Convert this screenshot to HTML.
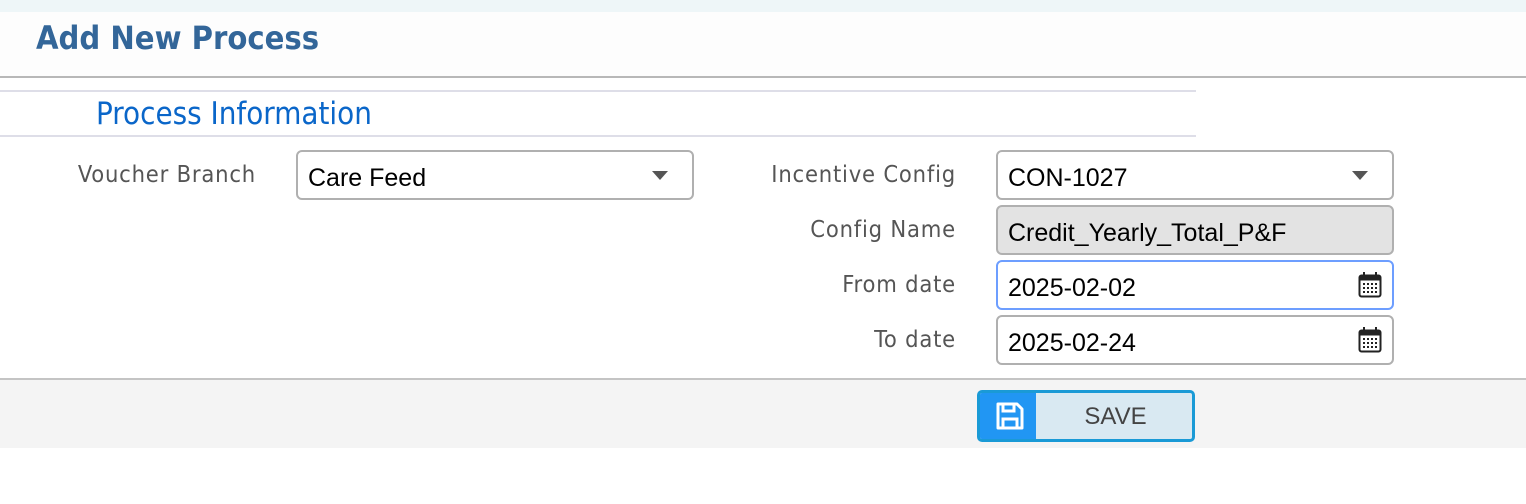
<!DOCTYPE html>
<html><head><style>
body{margin:0;width:1526px;height:504px;background:#fff;font-family:"DejaVu Sans","Liberation Sans",sans-serif;position:relative;overflow:hidden}
.a{position:absolute}
.lbl{position:absolute;color:#555;font-size:23.5px;letter-spacing:0.8px;text-align:right;font-family:"DejaVu Sans Condensed","DejaVu Sans",sans-serif;}
.inp{position:absolute;box-sizing:border-box;border:2px solid #b0b0b0;border-radius:6px;background:#fff;font-family:"Liberation Sans",sans-serif;font-size:25px;color:#000;padding-left:10px;padding-top:3px;line-height:46px;height:50px}
.caret{position:absolute;right:24px;top:19px;width:0;height:0;border-left:8px solid transparent;border-right:8px solid transparent;border-top:9px solid #555}
.cal{position:absolute;right:10px;top:10px}
</style></head><body>
<div class="a" style="left:0;top:0;width:1526px;height:12px;background:#eef6f8"></div>
<div class="a" style="left:0;top:12px;width:1526px;height:64px;background:#fdfdfd"></div>
<div class="a" style="left:36px;top:19px;font-size:32.4px;font-weight:bold;color:#336699;font-family:'DejaVu Sans Condensed','DejaVu Sans',sans-serif">Add New Process</div>
<div class="a" style="left:0;top:76px;width:1526px;height:2px;background:#b8b8b8"></div>
<div class="a" style="left:0;top:90px;width:1196px;height:2px;background:#dedee8"></div>
<div class="a" style="left:96px;top:96px;font-size:31px;color:#0a66c9;font-family:'DejaVu Sans Condensed','DejaVu Sans',sans-serif">Process Information</div>
<div class="a" style="left:0;top:135px;width:1196px;height:2px;background:#dedee8"></div>

<div class="lbl" style="left:0;width:256px;top:160px">Voucher Branch</div>
<div class="inp" style="left:296px;top:150px;width:398px">Care Feed<span class="caret"></span></div>

<div class="lbl" style="left:600px;width:356px;top:160px">Incentive Config</div>
<div class="inp" style="left:996px;top:150px;width:398px">CON-1027<span class="caret"></span></div>

<div class="lbl" style="left:600px;width:356px;top:215px">Config Name</div>
<div class="inp" style="left:996px;top:205px;width:398px;background:#e3e3e3">Credit_Yearly_Total_P&amp;F</div>

<div class="lbl" style="left:600px;width:356px;top:270px">From date</div>
<div class="inp" style="left:996px;top:260px;width:398px;border-color:#6d9eff">2025-02-02
<svg class="cal" width="24" height="26" viewBox="0 0 24 26"><rect x="1.5" y="3.5" width="21" height="21" rx="2" fill="none" stroke="#222" stroke-width="2"/><rect x="1.5" y="3.5" width="21" height="5" fill="#222"/><rect x="5" y="0" width="2" height="6" fill="#222"/><rect x="17" y="0" width="2" height="6" fill="#222"/><g fill="#222"><rect x="5" y="11" width="2" height="2"/><rect x="9" y="11" width="2" height="2"/><rect x="13" y="11" width="2" height="2"/><rect x="17" y="11" width="2" height="2"/><rect x="5" y="15" width="2" height="2"/><rect x="9" y="15" width="2" height="2"/><rect x="13" y="15" width="2" height="2"/><rect x="17" y="15" width="2" height="2"/><rect x="5" y="19" width="2" height="2"/><rect x="9" y="19" width="2" height="2"/><rect x="13" y="19" width="2" height="2"/><rect x="17" y="19" width="2" height="2"/></g></svg></div>

<div class="lbl" style="left:600px;width:356px;top:325px">To date</div>
<div class="inp" style="left:996px;top:315px;width:398px">2025-02-24
<svg class="cal" width="24" height="26" viewBox="0 0 24 26"><rect x="1.5" y="3.5" width="21" height="21" rx="2" fill="none" stroke="#222" stroke-width="2"/><rect x="1.5" y="3.5" width="21" height="5" fill="#222"/><rect x="5" y="0" width="2" height="6" fill="#222"/><rect x="17" y="0" width="2" height="6" fill="#222"/><g fill="#222"><rect x="5" y="11" width="2" height="2"/><rect x="9" y="11" width="2" height="2"/><rect x="13" y="11" width="2" height="2"/><rect x="17" y="11" width="2" height="2"/><rect x="5" y="15" width="2" height="2"/><rect x="9" y="15" width="2" height="2"/><rect x="13" y="15" width="2" height="2"/><rect x="17" y="15" width="2" height="2"/><rect x="5" y="19" width="2" height="2"/><rect x="9" y="19" width="2" height="2"/><rect x="13" y="19" width="2" height="2"/><rect x="17" y="19" width="2" height="2"/></g></svg></div>

<div class="a" style="left:0;top:378px;width:1526px;height:2px;background:#c4c4c4"></div>
<div class="a" style="left:0;top:380px;width:1526px;height:68px;background:#f4f4f4"></div>
<div class="a" style="left:977px;top:390px;width:218px;height:52px;box-sizing:border-box;border:3px solid #1a9ad6;border-radius:5px;background:#d9e9f2;overflow:hidden">
<div class="a" style="left:0;top:0;width:56px;height:46px;background:#2196f3"></div>
<svg class="a" style="left:16px;top:9px" width="28" height="28" viewBox="0 0 28 28"><path d="M2 2h19l5 5v19H2z" fill="none" stroke="#fff" stroke-width="3" stroke-linejoin="round"/><rect x="7" y="2" width="11" height="7" fill="none" stroke="#fff" stroke-width="3"/><rect x="7" y="17" width="14" height="9" fill="none" stroke="#fff" stroke-width="3"/></svg>
<div class="a" style="left:56px;top:0;width:159px;line-height:48px;text-align:center;font-family:'Liberation Sans',sans-serif;font-size:24px;color:#444">SAVE</div>
</div>
</body></html>
